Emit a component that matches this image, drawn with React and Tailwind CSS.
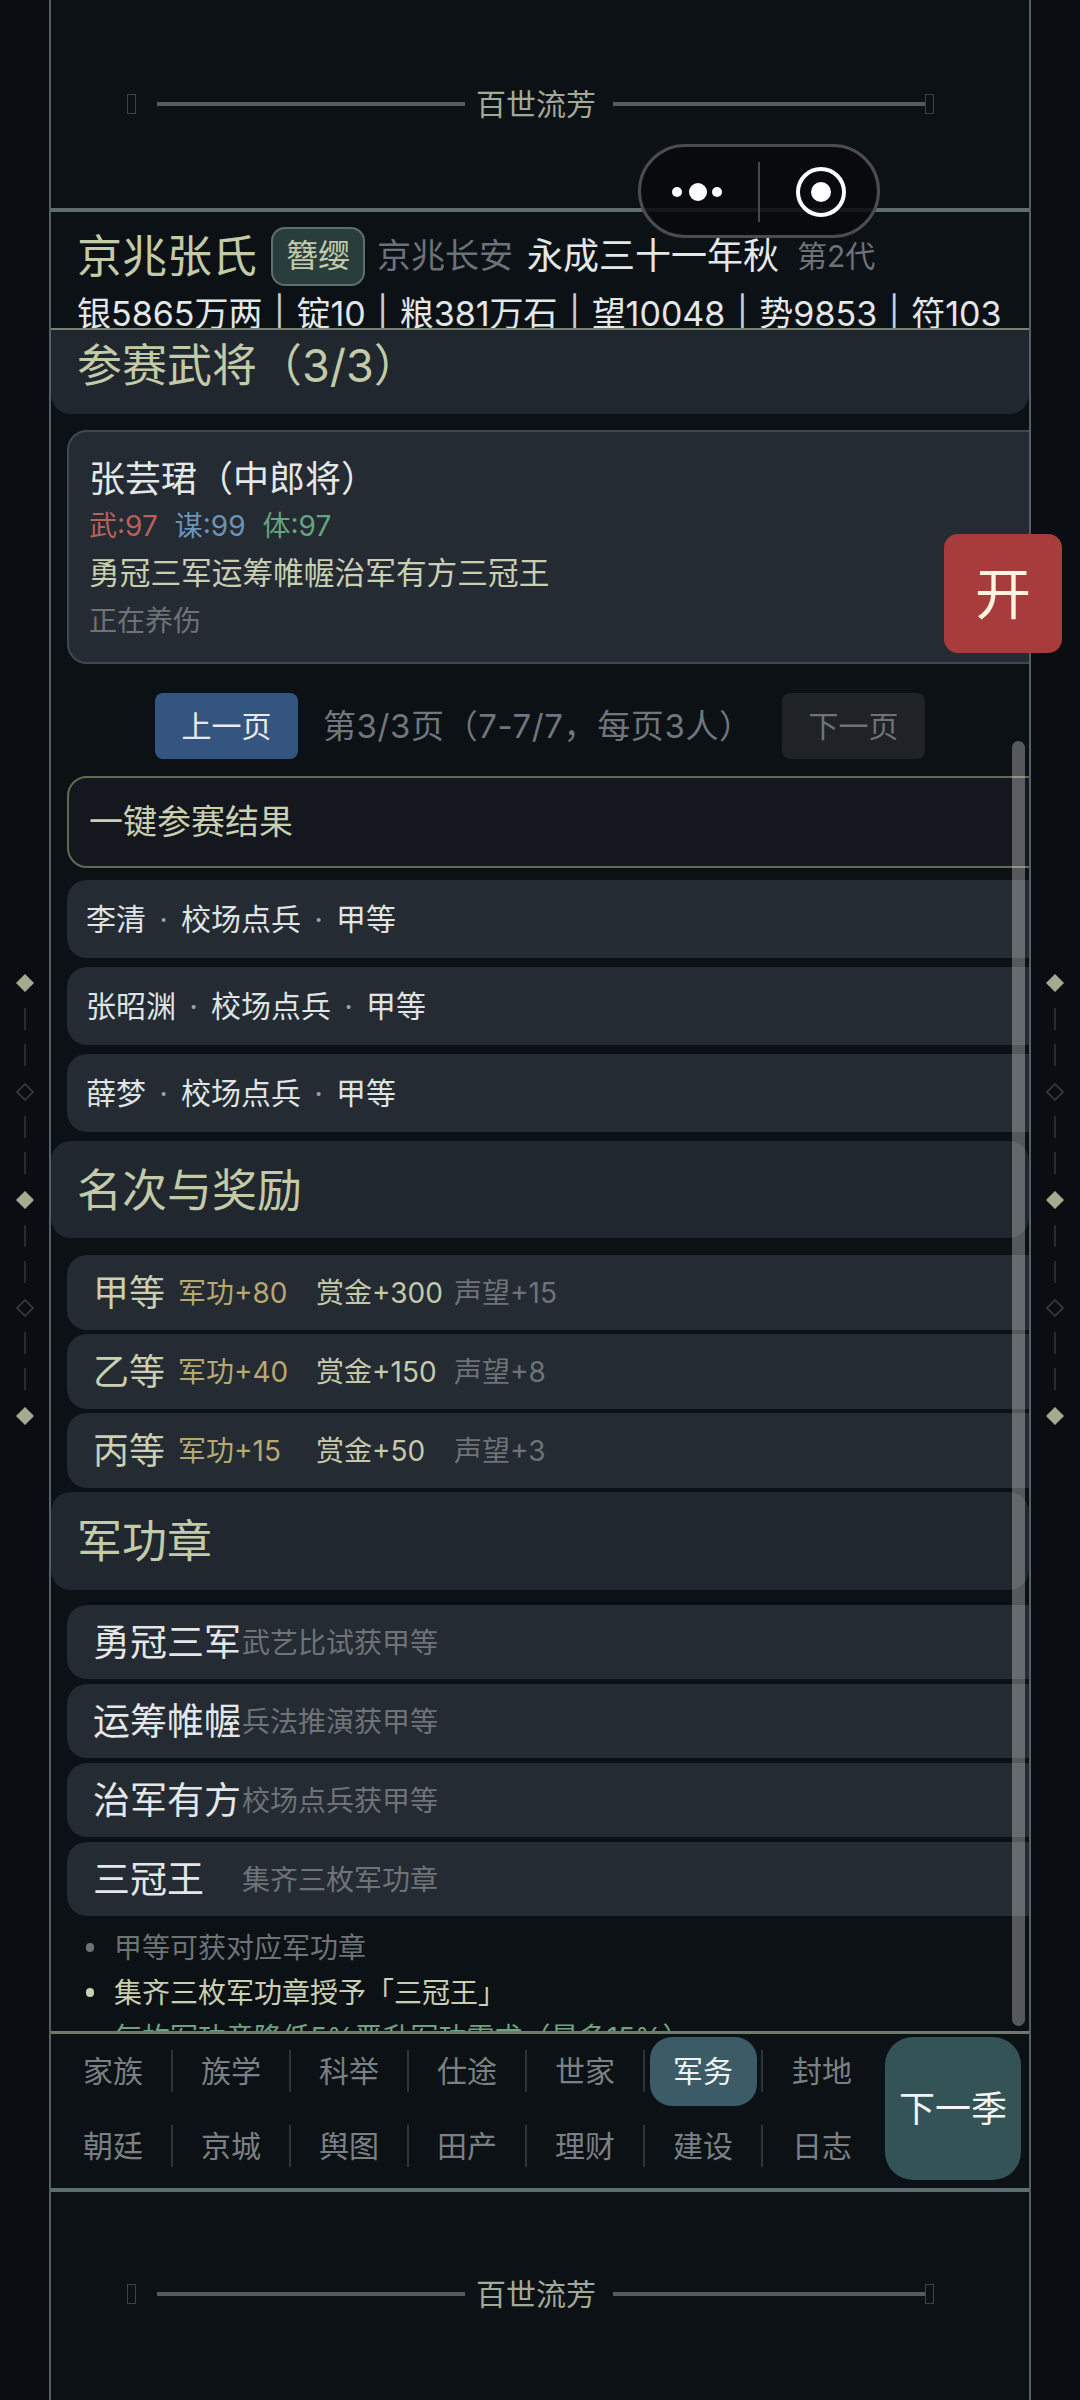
const Banner = ({ className }) => (
  <div className={`flex items-center pl-[76px] ${className}`}>
    <span className="w-[9px] h-[20px] border border-[#3c4347]" />
    <span className="w-[308px] h-[4px] bg-[#555c60] ml-[21px]" />
    <span className="w-[148px] pr-[6px] text-center text-[30px] leading-none text-[#a3a998]">百世流芳</span>
    <span className="w-[312px] h-[4px] bg-[#555c60]" />
    <span className="w-[9px] h-[20px] border border-[#3c4347]" />
  </div>
);

const Section = ({ children, className }) => (
  <div className={`shrink-0 bg-[#20272e] flex items-center pl-[26px] text-[45px] leading-none text-[#c2caa8] ${className}`}>
    {children}
  </div>
);

const Row = ({ children, className }) => (
  <div className={`shrink-0 ml-[16px] -mr-[30px] bg-[#242b33] rounded-[20px] flex items-center ${className}`}>
    {children}
  </div>
);

const Dot = () => <span className="w-[35px] text-center text-[#9aa0a4]">·</span>;
const Bar = () => <span className="w-[34px] text-center text-[#c8cccc]">|</span>;

const stats = ["银5865万两", "锭10", "粮381万石", "望10048", "势9853", "符103"];
const results = ["李清", "张昭渊", "薛梦"];
const rewards = [
  ["甲等", "军功+80", "赏金+300", "声望+15"],
  ["乙等", "军功+40", "赏金+150", "声望+8"],
  ["丙等", "军功+15", "赏金+50", "声望+3"],
];
const medals = [
  ["勇冠三军", "武艺比试获甲等"],
  ["运筹帷幄", "兵法推演获甲等"],
  ["治军有方", "校场点兵获甲等"],
  ["三冠王", "集齐三枚军功章"],
];
const notes = [
  ["甲等可获对应军功章", "text-[#6e7378]", "bg-[#6e7378]"],
  ["集齐三枚军功章授予「三冠王」", "text-[#c9cfb0]", "bg-[#c9cfb0]"],
  ["每枚军功章降低5%晋升军功需求（最多15%）", "text-[#6fa080]", "bg-[#6fa080]"],
];
const tabs = [
  ["家族", "族学", "科举", "仕途", "世家", "军务", "封地"],
  ["朝廷", "京城", "舆图", "田产", "理财", "建设", "日志"],
];

const Ornament = ({ className }) => (
  <svg className={`absolute top-[970px] ${className}`} width="20" height="460" viewBox="0 0 20 460" fill="none">
    {[13, 230, 446].map((y) => (
      <path key={y} d={`M10 ${y - 9}L19 ${y}L10 ${y + 9}L1 ${y}Z`} fill="#a2ab90" />
    ))}
    {[122, 338].map((y) => (
      <path key={y} d={`M10 ${y - 8}L18 ${y}L10 ${y + 8}L2 ${y}Z`} stroke="#3a3f44" strokeWidth="1.5" />
    ))}
    {[38, 74, 146, 182, 255, 291, 362, 398].map((y) => (
      <rect key={y} x="9" y={y} width="2" height="22" fill="#262b30" />
    ))}
  </svg>
);

export default function App() {
  return (
    <div className="relative w-[1080px] h-[2400px] overflow-hidden bg-[#0a0e13] font-['Inter','Noto_Sans_CJK_SC','Noto_Sans',sans-serif]">
      <div className="ml-[49px] w-[982px] h-full border-x-2 border-[#566064] bg-[#0c1116] flex flex-col">
        <Banner className="h-[208px] shrink-0" />
        <div className="h-[4px] shrink-0 bg-[#5d6d70]" />

        <div className="h-[116px] shrink-0 overflow-hidden pl-[26px]">
          <div className="flex items-center h-[60px] mt-[14px]">
            <span className="text-[45px] leading-none text-[#c2caa8]">京兆张氏</span>
            <span className="ml-[14px] w-[94px] h-[59px] rounded-[14px] border-2 border-[#5c6f6c] bg-[#2a3d3d] flex items-center justify-center text-[32px] leading-none text-[#c2caa8]">簪缨</span>
            <span className="ml-[12px] text-[34px] leading-none text-[#6c7278]">京兆长安</span>
            <span className="ml-[14px] text-[36px] leading-none text-[#e4e7e7]">永成三十一年秋</span>
            <span className="ml-[18px] text-[30px] leading-none text-[#6c7278]">第2代</span>
          </div>
          <div className="mt-[5px] flex text-[34px] leading-[46px] text-[#e4e7e7] whitespace-nowrap">
            {stats.map((s, i) => (
              <span key={s} className="flex">
                {i > 0 && <Bar />}
                {s}
              </span>
            ))}
          </div>
        </div>

        <div className="flex-1 min-h-0 overflow-hidden flex flex-col border-t-2 border-[#78806f]">
          <Section className="h-[84px] rounded-b-[20px] pb-[14px]">参赛武将（3/3）</Section>

          <div className="shrink-0 mt-[16px] ml-[16px] -mr-[30px] h-[234px] rounded-[20px] border-2 border-[#3c4a50] bg-[#252b33] pl-[20px] pt-[25px]">
            <div className="text-[36px] leading-[44px] text-[#e4e7e7]">张芸珺（中郎将）</div>
            <div className="mt-[6px] flex gap-[17px] text-[28px] leading-[38px]">
              <span className="text-[#b8605c]">武:97</span>
              <span className="text-[#6b94b8]">谋:99</span>
              <span className="text-[#62a67e]">体:97</span>
            </div>
            <div className="mt-[7px] text-[30.7px] leading-[42px] text-[#c9cfb0] whitespace-nowrap">勇冠三军运筹帷幄治军有方三冠王</div>
            <div className="mt-[7px] text-[28px] leading-[40px] text-[#6e7378]">正在养伤</div>
          </div>

          <div className="shrink-0 mt-[29px] h-[66px] ml-[104px] flex items-center">
            <span className="w-[143px] h-full rounded-[8px] bg-[#34557f] flex items-center justify-center text-[30px] text-[#e8ebec]">上一页</span>
            <span className="ml-[25px] w-[459px] text-[33px] tracking-[0.6px] leading-none text-[#70767c] whitespace-nowrap">第3/3页（7-7/7，每页3人）</span>
            <span className="w-[143px] h-full rounded-[8px] bg-[#1f2226] flex items-center justify-center text-[30px] text-[#6e7378]">下一页</span>
          </div>

          <div className="shrink-0 mt-[17px] ml-[16px] -mr-[30px] h-[92px] rounded-[20px] border-2 border-[#5f6b50] bg-[#14181e] pl-[20px] flex items-center text-[34px] leading-none text-[#c9cfb0]">一键参赛结果</div>

          <div className="shrink-0 mt-[12px] flex flex-col gap-[9px]">
            {results.map((n) => (
              <Row key={n} className="h-[78px] pl-[19px] text-[30px] leading-none text-[#dfe3e3]">
                {n}<Dot />校场点兵<Dot />甲等
              </Row>
            ))}
          </div>

          <Section className="h-[97px] mt-[9px] rounded-[20px] pt-[2px]">名次与奖励</Section>

          <div className="shrink-0 mt-[17px] flex flex-col gap-[4px]">
            {rewards.map(([g, a, b, c]) => (
              <Row key={g} className="h-[75px] pl-[26px] text-[28px] leading-none">
                <span className="w-[85px] text-[36px] text-[#c9cfb0]">{g}</span>
                <span className="w-[138px] text-[#b8a870]">{a}</span>
                <span className="w-[138px] text-[#c5c9a8]">{b}</span>
                <span className="text-[#6e7378]">{c}</span>
              </Row>
            ))}
          </div>

          <Section className="h-[98px] mt-[4px] rounded-[20px]">军功章</Section>

          <div className="shrink-0 mt-[15px] flex flex-col gap-[5px]">
            {medals.map(([n, d]) => (
              <Row key={n} className="h-[74px] pl-[26px] pt-[1px] leading-none">
                <span className="w-[149px] text-[37px] text-[#e4e7e7] whitespace-nowrap">{n}</span>
                <span className="text-[28px] text-[#6e7378]">{d}</span>
              </Row>
            ))}
          </div>

          <div className="shrink-0 mt-[9px] pl-[35px]">
            {notes.map(([t, c, b]) => (
              <div key={t} className={`relative h-[45px] pl-[28px] flex items-center text-[28px] leading-none whitespace-nowrap ${c}`}>
                <span className={`absolute left-[0px] top-[18px] w-[8px] h-[9px] rounded-full ${b}`} />
                {t}
              </div>
            ))}
          </div>
        </div>

        <div className="h-[3px] shrink-0 bg-[#6f7a6c]" />
        <div className="relative h-[154px] shrink-0">
          <div className="absolute left-[4px] top-[16px] flex flex-col gap-[33px]">
            {tabs.map((row, i) => (
              <div key={i} className="flex h-[42px]">
                {row.map((t, j) => (
                  <div key={t} className={`w-[118px] flex items-center justify-center text-[30px] leading-none ${j < 6 ? "border-r-2 border-[#2e3338]" : ""} ${t === "军务" ? "text-[#f0f2f2]" : "text-[#7a8084]"}`}>
                    {t === "军务" ? <span className="relative z-10">{t}</span> : t}
                  </div>
                ))}
              </div>
            ))}
          </div>
          <div className="absolute left-[599px] top-[3px] w-[107px] h-[69px] rounded-[22px] bg-[#3b5c66]" />
          <div className="absolute left-[834px] top-[3px] w-[136px] h-[143px] rounded-[28px] bg-[#335357] flex items-center justify-center text-[36px] leading-none text-[#f2f4f4]">下一季</div>
        </div>
        <div className="h-[4px] shrink-0 bg-[#5d6d70]" />
        <Banner className="h-[208px] shrink-0 pb-[5px]" />
      </div>

      <Ornament className="left-[15px]" />
      <Ornament className="left-[1045px]" />

      <div className="absolute left-[1012px] top-[741px] w-[13px] h-[1285px] rounded-full bg-white/30" />

      <div className="absolute left-[944px] top-[534px] w-[118px] h-[119px] rounded-[14px] bg-[#a83c3c] flex items-center justify-center text-[56px] leading-none text-[#fff4e0]">开</div>

      <div className="absolute left-[638px] top-[144px] w-[242px] h-[94px] rounded-full border-[3px] border-[#4a4c50] bg-[#08090cd9]">
        <svg className="absolute left-[-3px] top-[-3px]" width="242" height="94" viewBox="0 0 242 94" fill="white">
          <circle cx="39" cy="48" r="5" />
          <circle cx="60" cy="48" r="9" />
          <circle cx="79" cy="48" r="5" />
          <rect x="120" y="18" width="2" height="60" fill="#44474b" />
          <circle cx="183" cy="48" r="23" fill="none" stroke="white" strokeWidth="4" />
          <circle cx="183" cy="48" r="10" />
        </svg>
      </div>
    </div>
  );
}
